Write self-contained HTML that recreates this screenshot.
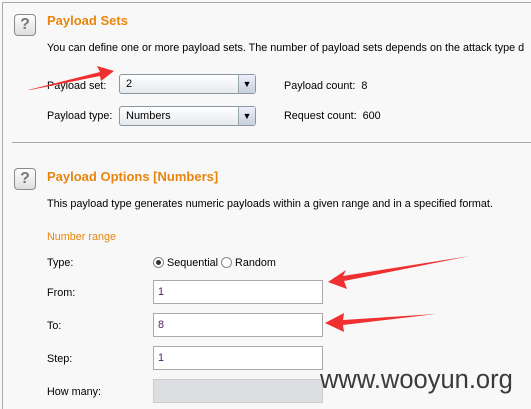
<!DOCTYPE html>
<html style="overflow:hidden;width:531px;height:409px"><head><style>
body{margin:0;width:531px;height:409px;background:#f8f8f8;font-family:"Liberation Sans",Arial,sans-serif;font-size:10.8px;color:#000;position:relative;overflow:hidden}
.a{position:absolute;white-space:nowrap}
.q{position:absolute;width:20px;height:20px;border:1px solid #8a8a8a;border-radius:4px;background:linear-gradient(#fff,#ddd);text-align:center;font:bold 16px "Liberation Sans",sans-serif;color:#777;line-height:20px}
.t{color:#e8850c;font-size:13px;font-weight:bold}
.dd{position:absolute;height:20px;border:1px solid #8a96a4;border-radius:3px;background:linear-gradient(#fff,#e6eaee);box-sizing:border-box}
.dd span{position:absolute;left:6px;top:3px;font-size:11px}
.dd i{position:absolute;right:0;top:0;width:16px;height:18px;border-left:1px solid #9aa;background:linear-gradient(#eef,#c8d0d8);font-style:normal;font-size:9px;text-align:center;line-height:18px}
.in{position:absolute;left:153px;width:170px;height:24px;border:1px solid #aaa;background:#fff;box-sizing:border-box;padding:5px 0 0 4px;color:#502060}
.r{display:inline-block;width:9px;height:9px;border:1px solid #888;border-radius:50%;background:#fff;vertical-align:-2px;position:relative}
</style></head><body>
<div class="a" style="left:2px;top:2px;width:529px;height:407px;border-left:1px solid #aaa;border-top:1px solid #aaa"></div>
<div class="a" style="left:12px;top:142px;width:519px;height:1px;background:#aaa"></div>
<div class="q" style="left:14px;top:14px">?</div>
<div class="a t" style="left:47px;top:13px">Payload Sets</div>
<div class="a" style="left:47px;top:42px">You can define one or more payload sets. The number of payload sets depends on the attack type d</div>
<div class="a" style="left:47px;top:80px">Payload set:</div>
<div class="dd" style="left:119px;top:74px;width:137px"><span>2</span><i>▼</i></div>
<div class="a" style="left:284px;top:80px">Payload count:&nbsp; 8</div>
<div class="a" style="left:47px;top:110px">Payload type:</div>
<div class="dd" style="left:119px;top:106px;width:137px"><span>Numbers</span><i>▼</i></div>
<div class="a" style="left:284px;top:110px">Request count:&nbsp; 600</div>
<div class="q" style="left:14px;top:168px">?</div>
<div class="a t" style="left:47px;top:169px">Payload Options [Numbers]</div>
<div class="a" style="left:47px;top:198px">This payload type generates numeric payloads within a given range and in a specified format.</div>
<div class="a" style="left:47px;top:231px;color:#e8850c">Number range</div>
<div class="a" style="left:47px;top:257px">Type:</div>
<div class="a" style="left:153px;top:257px"><span class="r"><b style="position:absolute;left:2px;top:2px;width:5px;height:5px;border-radius:50%;background:#333"></b></span> Sequential <span class="r"></span> Random</div>
<div class="a" style="left:47px;top:287px">From:</div><div class="in" style="top:280px">1</div>
<div class="a" style="left:47px;top:320px">To:</div><div class="in" style="top:313px">8</div>
<div class="a" style="left:47px;top:353px">Step:</div><div class="in" style="top:346px">1</div>
<div class="a" style="left:47px;top:386px">How many:</div><div class="in" style="top:379px;background:#dcdee2;border-color:#ccc"></div>
<div class="a" style="left:320px;top:366px;font-size:25.5px;color:#3a3a3a">www.wooyun.org</div>
<svg class="a" style="left:0;top:0" width="531" height="409">
<g fill="#f03030">
<polygon points="28,90 100,72 97,66 114,71 101,81 100,76 30,90"/>
<polygon points="470,256 343,276 346,270 328,282 347,289 344,281"/>
<polygon points="436,314 343,320 344,313 325,323 344,332 343,325"/>
</g></svg>
</body></html>
